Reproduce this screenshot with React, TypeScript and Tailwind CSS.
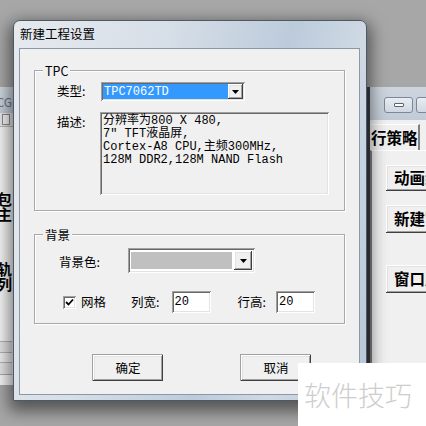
import React from 'react';

const cjk = { fontFamily: '"Noto Sans CJK SC", "Noto Sans", sans-serif' };
const mono = { fontFamily: '"Liberation Mono", "Noto Sans CJK SC", monospace' };

// classic 3D borders
const sunken =
  'shadow-[inset_1px_1px_0_#a0a0a0,inset_-1px_-1px_0_#ffffff,inset_2px_2px_0_#696969,inset_-2px_-2px_0_#e3e3e3]';
const raised =
  'shadow-[inset_-1px_-1px_0_#404040,inset_1px_1px_0_#ffffff,inset_-2px_-2px_0_#a0a0a0,inset_2px_2px_0_#e3e3e3]';

function Arrow() {
  return (
    <svg width="7" height="4" viewBox="0 0 7 4">
      <path d="M0 0h7L3.5 4z" fill="#000" />
    </svg>
  );
}

function Group({ label, className, children }: { label: string; className: string; children: React.ReactNode }) {
  return (
    <div className={`relative border border-[#a9a9a9] shadow-[inset_1px_1px_0_#fff,1px_1px_0_#fff] ${className}`}>
      <span className="absolute -top-[8px] left-[8px] bg-[#f0f0f0] px-[2px] leading-[15px]">{label}</span>
      {children}
    </div>
  );
}

function Btn({ children, className }: { children: React.ReactNode; className: string }) {
  return (
    <div
      className={`flex h-[27px] w-[71px] items-center justify-center border-l border-t border-[#a0a0a0] bg-[#f0f0f0] text-[12.5px] ${raised} ${className}`}
    >
      {children}
    </div>
  );
}

function Dialog() {
  return (
    <div
      className="absolute left-[13px] top-[20px] flex h-[381px] w-[354px] flex-col rounded-t-[7px] border border-[#4e5966] bg-[linear-gradient(105deg,#e6eaef_0%,#d6dee7_35%,#bccbdb_62%,#cfd9e4_78%,#b6c6d7_100%)] shadow-[0_6px_16px_4px_rgba(0,0,0,0.5)]"
      style={cjk}
    >
      <div className="flex h-[27px] items-center pl-[6px] text-[12.5px] text-black">新建工程设置</div>
      <div className="mb-[5px] ml-[5px] mr-[6px] flex-1 border border-[#8a98a8] bg-[#f0f0f0] text-[12.5px] text-black">
        <Group label="TPC" className="ml-[14px] mt-[21px] h-[141px] w-[311px]">
          <div className="pl-[22px] pt-[11px]">
            <div className="flex h-[19px] items-center">
              <span className="w-[44px]">类型:</span>
              <div className={`flex h-[19px] w-[144px] bg-white p-[2px] ${sunken}`}>
                <div className="flex flex-1 items-center bg-[#3399ff] pl-[1px] text-[12px] leading-none text-white" style={mono}>
                  TPC7062TD
                </div>
                <div className={`flex w-[15px] items-center justify-center bg-[#f0f0f0] ${raised}`}>
                  <Arrow />
                </div>
              </div>
            </div>
            <div className="mt-[11px] flex items-start">
              <span className="w-[43px] pt-[1px]">描述:</span>
              <div className={`h-[83px] w-[229px] bg-[#f0f0f0] pl-[3px] pt-[3px] text-[12px] leading-[13px] ${sunken}`} style={mono}>
                <div>分辨率为800 X 480,</div>
                <div>7" TFT液晶屏,</div>
                <div>Cortex-A8 CPU,主频300MHz,</div>
                <div>128M DDR2,128M NAND Flash</div>
              </div>
            </div>
          </div>
        </Group>

        <Group label="背景" className="ml-[14px] mt-[23px] h-[90px] w-[311px]">
          <div className="pl-[24px] pt-[13px]">
            <div className="flex h-[25px] items-center">
              <span className="w-[69px] pt-[4px]">背景色:</span>
              <div className={`flex h-[25px] w-[127px] items-stretch bg-white p-[3px] ${sunken}`}>
                <div className="mb-[1px] mt-[1px] flex-1 bg-[#c0c0c0]" />
                <div className={`ml-[2px] flex w-[18px] items-center justify-center bg-[#f0f0f0] ${raised}`}>
                  <Arrow />
                </div>
              </div>
            </div>
            <div className="mt-[18px] flex h-[22px] items-center">
              <div className={`ml-[4px] flex h-[13px] w-[13px] items-center justify-center bg-white ${sunken}`}>
                <svg width="9" height="8" viewBox="0 0 9 8">
                  <path d="M1 4l2.5 2.5L8 1.5" fill="none" stroke="#000" strokeWidth="1.8" />
                </svg>
              </div>
              <span className="ml-[5px]">网格</span>
              <span className="ml-[25px]">列宽:</span>
              <div className={`ml-[12px] flex h-[22px] w-[39px] items-center bg-white pl-[3px] text-[12px] ${sunken}`} style={mono}>
                20
              </div>
              <span className="ml-[27px]">行高:</span>
              <div className={`ml-[10px] flex h-[22px] w-[39px] items-center bg-white pl-[3px] text-[12px] ${sunken}`} style={mono}>
                20
              </div>
            </div>
          </div>
        </Group>

        <div className="mt-[30px] flex">
          <Btn className="ml-[72px]">确定</Btn>
          <Btn className="ml-[77px]">取消</Btn>
        </div>
      </div>
    </div>
  );
}

function LeftWindow() {
  return (
    <div className="absolute left-[-300px] top-[87px] flex h-[298px] w-[313px] flex-col bg-[#f2f2f2]" style={cjk}>
      <div className="flex h-[26px] items-end justify-end bg-[linear-gradient(180deg,#d0d8e0,#c2ccd8)] pb-[2px] pr-[1px] text-[12px] text-[#6a7480]">
        CG
      </div>
      <div className="flex h-[14px] items-center justify-end border-b border-[#b8b8b8] bg-[#e6e6e6] pr-[3px]">
        <div className="h-[11px] w-[8px] border border-[#8a8a8a] bg-[#f4f4f4]" />
      </div>
      <div className="flex flex-1 flex-col items-end bg-[#f4f4f4] pr-[1px] text-[15px] font-bold leading-[15px] text-black">
        <div className="mt-[64px]">打包</div>
        <div>一主</div>
        <div className="mt-[40px]">行轨</div>
        <div>一列</div>
        <div className="mt-[50px] h-[12px] w-full border-b border-t border-[#b0b0b0] bg-[#e2e2e2]" />
        <div className="h-[10px] w-full border-b border-[#b0b0b0] bg-[#ececec]" />
        <div className="h-[12px] w-full border-b border-[#a8a8a8] bg-[#e4e4e4]" />
      </div>
    </div>
  );
}

function RightWindow() {
  return (
    <div className="absolute left-[367px] top-[87px] flex h-[360px] w-[200px] flex-col border-l-[3px] border-[#3a3f46] bg-[#f0f0f0]" style={cjk}>
      <div className="flex h-[33px] items-start gap-[3px] bg-[linear-gradient(180deg,#cdd5de,#c1cbd6)] pl-[14px] pt-[10px]">
        <div className="flex h-[16px] w-[29px] items-center justify-center rounded-[3px] border border-[#7c8897] bg-[linear-gradient(180deg,#e8edf2,#cfd8e2)]">
          <div className="h-[4px] w-[10px] rounded-[1px] border border-[#5a6470] bg-white" />
        </div>
        <div className="h-[16px] w-[29px] rounded-[3px] border border-[#7c8897] bg-[linear-gradient(180deg,#e8edf2,#cfd8e2)]" />
      </div>
      <div className="flex h-[30px] items-end">
        <div className="flex h-[26px] w-[50px] items-center border-r-2 border-t border-[#808080] border-t-white pl-[1px] text-[15.5px] font-bold text-black">
          行策略
        </div>
      </div>
      <div className="flex flex-1 flex-col border-l-2 border-t border-[#808080] border-t-white pl-[14px] text-[15.5px] font-bold text-black">
        <div className={`mt-[14px] flex h-[26px] items-center pl-[8px] whitespace-nowrap ${raised}`}>动画组态设置</div>
        <div className={`mt-[14px] flex h-[28px] items-center pl-[8px] whitespace-nowrap ${raised}`}>新建窗口</div>
        <div className={`mt-[32px] flex h-[28px] items-center pl-[8px] whitespace-nowrap ${raised}`}>窗口属性</div>
      </div>
    </div>
  );
}

export default function App() {
  return (
    <div className="relative h-[426px] w-[426px] overflow-hidden bg-[#a7a7a7]">
      <LeftWindow />
      <RightWindow />
      <Dialog />
      <div className="absolute left-[298px] top-[363px] flex h-[63px] w-[128px] items-center bg-white pl-[6px]" style={cjk}>
        <span className="text-[27px] font-light leading-none tracking-[0px] text-[#cdcdcd]">软件技巧</span>
      </div>
    </div>
  );
}
